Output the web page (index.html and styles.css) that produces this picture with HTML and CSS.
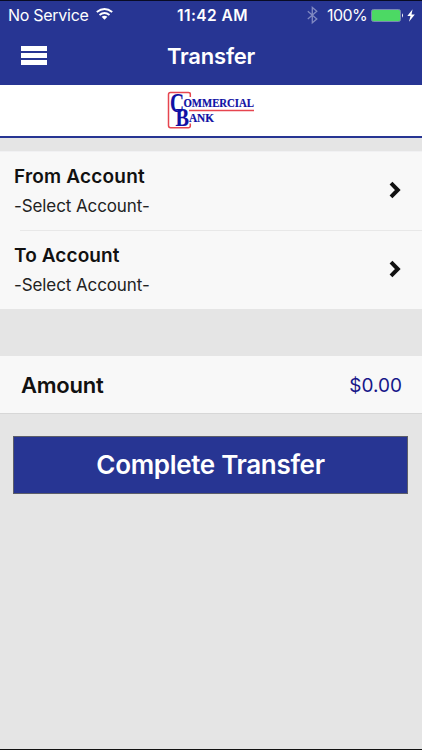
FILE: index.html
```html
<!DOCTYPE html>
<html lang="en">
<head>
<meta charset="utf-8">
<title>Transfer</title>
<link rel="stylesheet" href="styles.css">
</head>
<body>
<div class="screen">
  <header class="top">
    <div class="status">
      <div class="status-left">
        <span class="carrier">No Service</span>
        <svg class="wifi" width="17" height="12" viewBox="0 0 17 12" fill="none" stroke="#fff" stroke-width="1.9">
          <path d="M.8 4.1Q8.5-2.3 16.2 4.1M3.5 7Q8.5 2.9 13.5 7"/>
          <path d="M5.6 8.8Q8.5 6.5 11.4 8.8L8.5 11.8Z" fill="#fff" stroke="none"/>
        </svg>
      </div>
      <span class="time">11:42 AM</span>
      <div class="status-right">
        <svg class="bluetooth" width="11" height="17" viewBox="0 0 11 17" fill="none" stroke="#8089c2" stroke-width="1.3">
          <path d="M.8 4.300l9 7.600-4.500 3.900V.4l4.500 3.900-9 7.600"/>
        </svg>
        <span class="percent">100%</span>
        <svg class="battery" width="33" height="13" viewBox="0 0 33 13">
          <rect x=".5" y=".5" width="29" height="12" rx="2" fill="#4cd964" stroke="#7887b4"/>
          <path d="M31 4.3q2 2.2 0 4.4z" fill="#fff"/>
        </svg>
        <svg class="bolt" width="8" height="13" viewBox="0 0 8 13"><path d="M5.6.2L.3 7.1h3.2L2 12.800l5.800-7.400H4.500z" fill="#fff"/></svg>
      </div>
    </div>
    <div class="nav">
      <div class="menu"><i></i><i></i><i></i></div>
      <h1>Transfer</h1>
    </div>
  </header>
  <div class="brand">
    <svg width="90" height="40" viewBox="0 0 90 40">
      <path d="M24.300 7V4Q24.300 2.500 22.300 2.500H4.500Q2.500 2.500 2.500 4.500V35.500Q2.500 37.700 4.500 37.700H22.300Q24.300 37.700 24.300 36V33.500M23 20.500H88" fill="none" stroke="#e6454f" stroke-width="1.500"/>
      <g class="logo-text">
        <text x="4" y="21.800" font-size="27" textLength="14" lengthAdjust="spacingAndGlyphs">C</text>
        <text x="17.500" y="16.800" font-size="12" textLength="70.500" lengthAdjust="spacingAndGlyphs">OMMERCIAL</text>
        <text x="9.500" y="35.500" font-size="26" textLength="13.500" lengthAdjust="spacingAndGlyphs">B</text>
        <text x="23" y="31.800" font-size="12" textLength="25" lengthAdjust="spacingAndGlyphs">ANK</text>
      </g>
    </svg>
  </div>
  <main>
    <section class="accounts">
      <div class="account">
        <div><h2>From Account</h2><p>-Select Account-</p></div>
        <svg class="chevron" width="12" height="18" viewBox="0 0 12 18"><path d="M2 2.200L8.800 9L2 15.800" fill="none" stroke="#111" stroke-width="4"/></svg>
      </div>
      <div class="divider"></div>
      <div class="account second">
        <div><h2>To Account</h2><p>-Select Account-</p></div>
        <svg class="chevron" width="12" height="18" viewBox="0 0 12 18"><path d="M2 2.200L8.800 9L2 15.800" fill="none" stroke="#111" stroke-width="4"/></svg>
      </div>
    </section>
    <section class="amount"><span class="label">Amount</span><span class="value">$0.00</span></section>
    <button class="submit"><span>Complete Transfer</span></button>
  </main>
</div>
</body>
</html>
```
FILE: styles.css
```css
* { box-sizing: border-box; }
body { margin: 0; font-family: Inter, "Liberation Sans", sans-serif; color: #111; }
h1, h2, p { margin: 0; white-space: nowrap; }
svg { display: block; flex: none; overflow: visible; }
.screen { height: 750px; background: #e5e5e5; border-bottom: 1px solid #111; overflow: hidden; }
.top { height: 85px; background: #273593; border-top: 1px solid #080b25; color: #fff; }
.status { display: grid; grid-template-columns: 1fr auto 1fr; height: 28px; padding: 0 7px 0 8px; align-items: center; font-size: 16px; line-height: 20px; }
.status-left, .status-right { display: flex; align-items: center; }
.status-right { justify-content: flex-end; }
.carrier { letter-spacing: -.28px; }
.wifi { margin: -2px 0 0 7px; }
.time { font-weight: 600; font-size: 15.500px; letter-spacing: .45px; padding: 1px 0 0 2px; }
.bluetooth { margin-right: 9px; }
.percent { letter-spacing: -.6px; }
.battery { margin-left: 4px; }
.bolt { margin-left: 3px; }
.nav { display: grid; grid-template-columns: 100px 1fr 100px; height: 54px; align-items: center; }
.menu { width: 26px; margin: -1px 0 0 21px; display: grid; gap: 2px; }
.menu i { height: 5.300px; background: #fff; }
.nav h1 { font-size: 22px; line-height: 28px; font-weight: 600; letter-spacing: -.2px; text-align: center; }
.brand { height: 53px; background: #fff; border-bottom: 2px solid #273593; display: flex; justify-content: center; padding-top: 5px; }
.logo-text { font-family: "Liberation Serif", serif; font-weight: 700; fill: #1010a4; stroke: #1010a4; stroke-width: .2px; }
main { padding-top: 13px; }
.accounts { height: 158px; background: #f8f8f8; border-top: 1px solid #f1f1f3; }
.account { height: 78px; display: flex; justify-content: space-between; align-items: flex-start; padding: 12px 21px 0 14px; }
.account h2 { font-size: 19px; line-height: 26px; font-weight: 600; letter-spacing: .2px; }
.account.second h2 { letter-spacing: .1px; }
.account p { font-size: 17px; line-height: 22px; margin-top: 5px; letter-spacing: -.1px; color: #222; }
.chevron { margin-top: 17px; }
.divider { height: 1px; margin-left: 20px; background: #e8e8e8; }
.amount { height: 58px; margin-top: 47px; background: #f8f8f8; border-bottom: 1px solid #d7d7d7; display: flex; justify-content: space-between; align-items: center; padding: 0 20px 0 21px; }
.label { font-size: 22px; font-weight: 600; letter-spacing: -.25px; }
.value { font-size: 19px; color: #171789; padding-top: 2px; }
.submit { display: block; width: 395px; height: 58px; margin: 22px auto 0 13px; padding: 0; border: 1.500px solid #5c5e69; border-radius: 0; background: #273593; color: #fff; font: 600 26px/30px Inter, sans-serif; letter-spacing: -.32px; }
```
